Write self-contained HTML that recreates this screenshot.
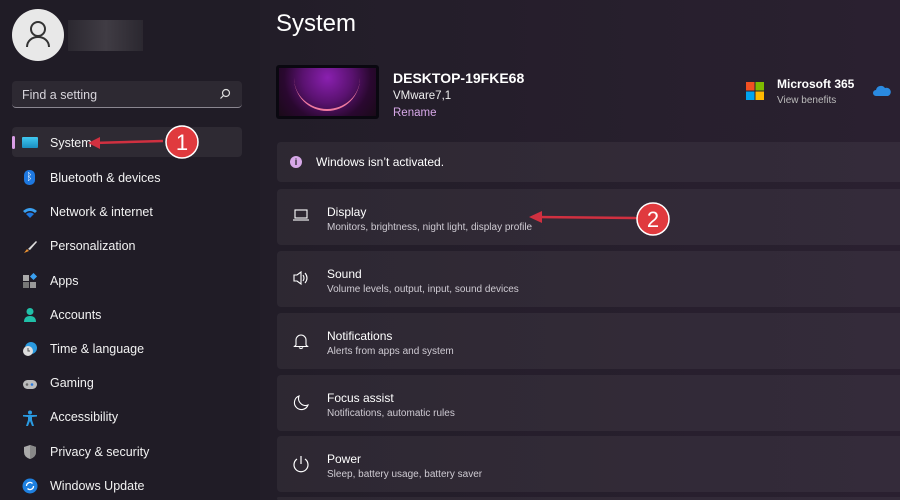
<!DOCTYPE html>
<html><head><style>
*{box-sizing:border-box;margin:0;padding:0}
html,body{width:900px;height:500px;overflow:hidden}
body{background:#201c26;font-family:"Liberation Sans",sans-serif;color:#fff;position:relative}
.main{position:absolute;left:260px;top:0;right:0;bottom:0;background:linear-gradient(90deg,#221d28,#271f2d 60%,#2a2030)}
.abs{position:absolute}
.nav{position:absolute;left:50px;font-size:12.5px;color:#f2f2f2}
.ic{position:absolute;left:22px;width:16px;height:16px}
.card{position:absolute;left:277px;width:640px;height:56px;background:rgba(255,255,255,0.05);border-radius:4px}
.card .t{position:absolute;left:50px;top:16px;font-size:12px;color:#fff}
.card .s{position:absolute;left:50px;top:33px;font-size:10px;color:#cfcbd3}
.card svg{position:absolute;left:15px;top:19px}
</style></head><body>
<div class="main"></div>
<div class="abs" style="left:12px;top:9px;width:52px;height:52px;border-radius:50%;background:#e8e8e8"></div>
<svg class="abs" style="left:25px;top:20px" width="26" height="28" viewBox="0 0 26 28"><circle cx="13" cy="9" r="7" fill="none" stroke="#333" stroke-width="2"/><path d="M2 27c0-6 5-10 11-10s11 4 11 10" fill="none" stroke="#333" stroke-width="2"/></svg>
<div class="abs" style="left:68px;top:20px;width:75px;height:31px;background:linear-gradient(90deg,#2b2830,#403c44,#2b2830)"></div>
<div class="abs" style="left:12px;top:81px;width:230px;height:27px;background:#2d2932;border-radius:4px;border-bottom:1px solid #8a8690"></div>
<div class="abs" style="left:22px;top:88px;font-size:12.5px;color:#d8d5dc">Find a setting</div>
<svg class="abs" style="left:219px;top:88px" width="12" height="12" viewBox="0 0 12 12"><circle cx="7" cy="5" r="3.5" fill="none" stroke="#ddd" stroke-width="1.2"/><path d="M4.5 7.5L1.5 10.5" stroke="#ddd" stroke-width="1.2"/></svg>
<div class="abs" style="left:12px;top:127px;width:230px;height:30px;background:#2e2a33;border-radius:4px"></div>
<div class="abs" style="left:12px;top:136px;width:3px;height:13px;background:#d99ee6;border-radius:2px"></div>
<div class="ic" style="top:137px;height:11px;background:linear-gradient(#40c8f0,#1a8ec0);border-radius:1px"></div>
<div class="nav" style="top:136px">System</div>
<div class="ic" style="top:170px;left:24px;width:11px;height:15px;background:#1e78e0;border-radius:5px;color:#fff;font-size:10px;text-align:center;line-height:15px">ᛒ</div>
<div class="nav" style="top:171px">Bluetooth &amp; devices</div>
<svg class="ic" style="top:205px" viewBox="0 0 16 16"><path d="M1 6q7-6 14 0l-2 2q-5-4-10 0z" fill="#3aa0f0"/><path d="M4 9q4-3 8 0l-4 4z" fill="#1e78e0"/></svg>
<div class="nav" style="top:205px">Network &amp; internet</div>
<svg class="ic" style="top:239px" viewBox="0 0 16 16"><path d="M2 14l3-4 2 2z" fill="#e89030"/><path d="M6 10L14 2l1 1-7 8z" fill="#ddd"/></svg>
<div class="nav" style="top:239px">Personalization</div>
<svg class="ic" style="top:273px" viewBox="0 0 16 16"><rect x="1" y="2" width="6" height="6" fill="#aaa"/><rect x="1" y="9" width="6" height="6" fill="#777"/><rect x="8" y="9" width="6" height="6" fill="#999"/><rect x="9" y="1" width="5" height="5" fill="#3aa0f0" transform="rotate(45 11.5 3.5)"/></svg>
<div class="nav" style="top:274px">Apps</div>
<svg class="ic" style="top:307px" viewBox="0 0 16 16"><circle cx="8" cy="4.5" r="3.5" fill="#20c0a8"/><path d="M2 15q0-6 6-6t6 6z" fill="#20c0a8"/></svg>
<div class="nav" style="top:308px">Accounts</div>
<svg class="ic" style="top:341px" viewBox="0 0 16 16"><circle cx="9" cy="7" r="6" fill="#2a9ae0"/><circle cx="6" cy="10" r="5" fill="#ddd"/><path d="M6 7v3h2" stroke="#555" fill="none"/></svg>
<div class="nav" style="top:342px">Time &amp; language</div>
<svg class="ic" style="top:376px" viewBox="0 0 16 16"><rect x="1" y="4" width="14" height="9" rx="4.5" fill="#bbb"/><circle cx="10" cy="8.5" r="1.3" fill="#2a7ae0"/><circle cx="5" cy="8.5" r="1.3" fill="#666"/></svg>
<div class="nav" style="top:376px">Gaming</div>
<svg class="ic" style="top:410px" viewBox="0 0 16 16"><circle cx="8" cy="2.5" r="2" fill="#2a9ae0"/><path d="M1 5h14v1.5l-5 .5v3l2 6h-2l-2-5-2 5H4l2-6V7l-5-.5z" fill="#2a9ae0"/></svg>
<div class="nav" style="top:410px">Accessibility</div>
<svg class="ic" style="top:444px" viewBox="0 0 16 16"><path d="M8 1l6 2v5q0 5-6 7-6-2-6-7V3z" fill="#aaa"/><path d="M8 1l6 2v5q0 5-6 7z" fill="#888"/></svg>
<div class="nav" style="top:445px">Privacy &amp; security</div>
<svg class="ic" style="top:478px" viewBox="0 0 16 16"><circle cx="8" cy="8" r="7.5" fill="#1e80e0"/><path d="M4.5 8a3.5 3.5 0 0 1 6-2.5M11.5 8a3.5 3.5 0 0 1-6 2.5" stroke="#fff" stroke-width="1.3" fill="none"/></svg>
<div class="nav" style="top:479px">Windows Update</div>
<svg class="abs" style="left:85px;top:125px" width="125" height="36" viewBox="0 0 125 36"><path d="M8 18L78 16" stroke="#d03040" stroke-width="2.5"/><path d="M3 18l12-6v12z" fill="#d03040"/><circle cx="97" cy="17" r="16" fill="#e03a3e" stroke="#fff" stroke-width="1.5"/><text x="97" y="25" text-anchor="middle" font-size="22" font-family="Liberation Sans" fill="#fff">1</text></svg>
<div class="abs" style="left:276px;top:10px;font-size:24px;font-weight:500">System</div>
<div class="abs" style="left:276px;top:65px;width:103px;height:54px;background:#0a0810;border-radius:3px;overflow:hidden"><div style="position:absolute;left:3px;top:3px;width:97px;height:48px;background:radial-gradient(circle at 50% 20%,#8a20b0 0%,#5a1270 40%,#2a0830 70%,#1a0a18);"></div><div style="position:absolute;left:18px;top:-20px;width:66px;height:66px;border-radius:50%;border-bottom:2px solid #f07aa0"></div></div>
<div class="abs" style="left:393px;top:70px;font-size:14px;font-weight:bold">DESKTOP-19FKE68</div>
<div class="abs" style="left:393px;top:90px;font-size:11.5px;color:#eee">VMware7,1</div>
<div class="abs" style="left:393px;top:107px;font-size:11.5px;color:#d7a8e8">Rename</div>
<svg class="abs" style="left:746px;top:82px" width="18" height="18"><rect width="8.5" height="8.5" fill="#f25022"/><rect x="9.5" width="8.5" height="8.5" fill="#7fba00"/><rect y="9.5" width="8.5" height="8.5" fill="#00a4ef"/><rect x="9.5" y="9.5" width="8.5" height="8.5" fill="#ffb900"/></svg>
<div class="abs" style="left:777px;top:77px;font-size:12px;font-weight:bold">Microsoft 365</div>
<div class="abs" style="left:777px;top:95px;font-size:10px;color:#bbb">View benefits</div>
<svg class="abs" style="left:873px;top:85px" width="18" height="12"><path d="M3 11a3 3 0 0 1 0-6 5 5 0 0 1 9-2 3.5 3.5 0 0 1 3 8z" fill="#2a8ae0"/></svg>
<div class="card" style="top:142px;height:40px"><div style="position:absolute;left:13px;top:14px;width:12px;height:12px;border-radius:50%;background:#d7a8e8;color:#222;font-size:9px;text-align:center;line-height:12px;font-weight:bold">i</div><div style="position:absolute;left:39px;top:13px;font-size:12px">Windows isn’t activated.</div></div>
<div class="card" style="top:189px"><svg width="18" height="14"><rect x="3" y="2" width="12" height="8" fill="none" stroke="#fff" stroke-width="1.1"/><path d="M1 12h16" stroke="#fff" stroke-width="1.1"/></svg><div class="t">Display</div><div class="s">Monitors, brightness, night light, display profile</div></div>
<div class="card" style="top:251px"><svg width="18" height="16"><path d="M2 5h3l4-3v12l-4-3H2z" fill="none" stroke="#fff" stroke-width="1.1"/><path d="M11 5q2 3 0 6M13 3q4 5 0 10" fill="none" stroke="#fff" stroke-width="1.1"/></svg><div class="t">Sound</div><div class="s">Volume levels, output, input, sound devices</div></div>
<div class="card" style="top:313px"><svg width="18" height="18"><path d="M4 13V8a5 5 0 0 1 10 0v5l1.5 1.5h-13z" fill="none" stroke="#fff" stroke-width="1.1"/><path d="M7 15.5q2 2 4 0" fill="none" stroke="#fff" stroke-width="1.1"/></svg><div class="t">Notifications</div><div class="s">Alerts from apps and system</div></div>
<div class="card" style="top:375px"><svg width="18" height="18"><path d="M7 2a7 7 0 1 0 9 9A7 7 0 0 1 7 2z" fill="none" stroke="#fff" stroke-width="1.1"/></svg><div class="t">Focus assist</div><div class="s">Notifications, automatic rules</div></div>
<div class="card" style="top:436px"><svg width="18" height="18"><path d="M9 1v8" stroke="#fff" stroke-width="1.2"/><path d="M5 4a7 7 0 1 0 8 0" fill="none" stroke="#fff" stroke-width="1.2"/></svg><div class="t">Power</div><div class="s">Sleep, battery usage, battery saver</div></div>
<div class="card" style="top:497px;height:3px"></div>
<svg class="abs" style="left:525px;top:200px" width="150" height="36" viewBox="0 0 150 36"><path d="M10 17L112 18" stroke="#d03040" stroke-width="2.5"/><path d="M4 17l13-6v12z" fill="#d03040"/><circle cx="128" cy="19" r="16" fill="#e03a3e" stroke="#fff" stroke-width="1.5"/><text x="128" y="27" text-anchor="middle" font-size="22" font-family="Liberation Sans" fill="#fff">2</text></svg>
</body></html>
